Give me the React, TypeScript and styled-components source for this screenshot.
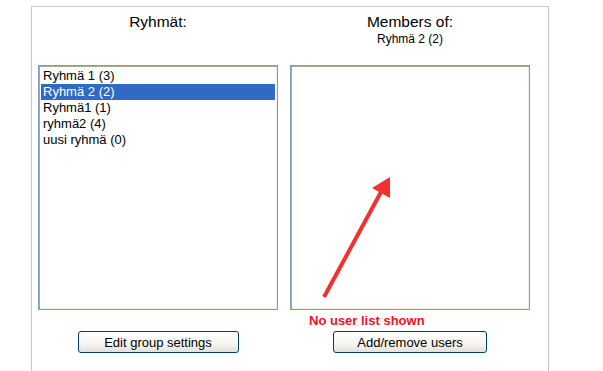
import React from 'react';
import styled, { createGlobalStyle } from 'styled-components';

const GlobalStyle = createGlobalStyle`
  body {
    margin: 0;
    background: #ffffff;
    font-family: Arial, "Liberation Sans", sans-serif;
    color: #000;
  }
`;

const Panel = styled.div`
  margin: 6px 0 0 31px;
  width: 504px;
  height: 380px;
  border: 1px solid #c9c9c9;
  border-bottom: none;
  display: grid;
  grid-template-columns: 240px 240px;
  column-gap: 12px;
  padding: 0 6px;
`;

const Column = styled.div`
  display: flex;
  flex-direction: column;
  align-items: center;
`;

const Header = styled.div`
  height: 58px;
  padding-top: 6px;
  box-sizing: border-box;
  text-align: center;
`;

const Title = styled.div`
  font-size: 15.5px;
  line-height: 18px;
`;

const Subtitle = styled.div`
  font-size: 12px;
  line-height: 14px;
  margin-top: 1px;
`;

const ListArea = styled.div`
  position: relative;
  width: 240px;
  height: 245px;
`;

const ListBox = styled.div`
  box-sizing: border-box;
  width: 100%;
  height: 100%;
  border: 1px solid #7f9db9;
  box-shadow: inset 1px 1px 0 #aca899, inset -1px -1px 0 #f1efe2;
  padding: 2px;
  background: #fff;
`;

const Item = styled.div<{ $selected?: boolean }>`
  height: 16px;
  line-height: 16px;
  font-size: 13px;
  padding-left: 2px;
  white-space: nowrap;
  background: ${p => (p.$selected ? '#316ac5' : 'transparent')};
  color: ${p => (p.$selected ? '#fff' : '#000')};
`;

const Note = styled.div`
  position: absolute;
  left: 19px;
  top: calc(100% + 3px);
  font-size: 13px;
  line-height: 15px;
  font-weight: bold;
  color: #f4111c;
  white-space: nowrap;
`;

const Arrow = styled.svg`
  position: absolute;
  left: 0;
  top: 0;
  pointer-events: none;
`;

const Button = styled.button<{ $w: number }>`
  margin-top: 21px;
  width: ${p => p.$w}px;
  height: 22px;
  padding: 0;
  border: 1px solid #003c74;
  border-radius: 3px;
  background: linear-gradient(180deg, #ffffff 0%, #f5f4ef 60%, #e3e1d8 100%);
  font-family: Arial, "Liberation Sans", sans-serif;
  font-size: 13px;
  color: #000;
  cursor: pointer;
`;

const groups = ['Ryhmä 1 (3)', 'Ryhmä 2 (2)', 'Ryhmä1 (1)', 'ryhmä2 (4)', 'uusi ryhmä (0)'];

export default function App() {
  return (
    <>
      <GlobalStyle />
      <Panel>
        <Column>
          <Header>
            <Title>Ryhmät:</Title>
          </Header>
          <ListArea>
            <ListBox>
              {groups.map((g, i) => (
                <Item key={g} $selected={i === 1}>
                  {g}
                </Item>
              ))}
            </ListBox>
          </ListArea>
          <Button $w={161}>Edit group settings</Button>
        </Column>
        <Column>
          <Header>
            <Title>Members of:</Title>
            <Subtitle>Ryhmä 2 (2)</Subtitle>
          </Header>
          <ListArea>
            <ListBox />
            <Arrow width="240" height="245" viewBox="0 0 240 245">
              <line x1="34" y1="232" x2="91" y2="127" stroke="#f2302f" strokeWidth="4" />
              <polygon points="100,112 82,123 100,133" fill="#f2302f" />
            </Arrow>
            <Note>No user list shown</Note>
          </ListArea>
          <Button $w={154}>Add/remove users</Button>
        </Column>
      </Panel>
    </>
  );
}
